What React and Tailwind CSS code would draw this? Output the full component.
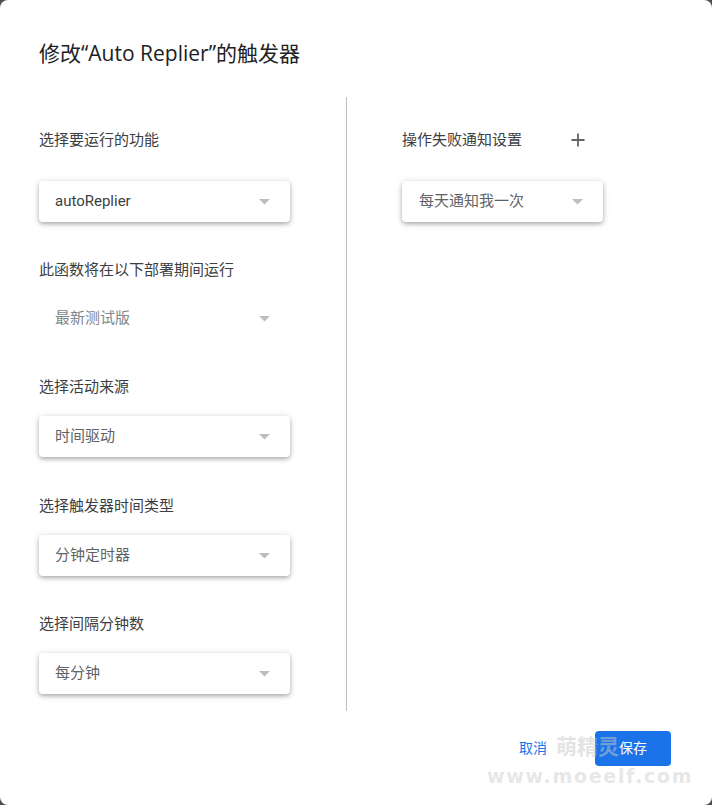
import React from "react";

const FONT = { fontFamily: 'Roboto, "Noto Sans CJK SC", sans-serif' };

function Arrow() {
  return (
    <svg width="11" height="6" viewBox="0 0 11 6" className="shrink-0">
      <path d="M0 0 L11 0 L5.5 5.5 Z" fill="#bdbdbd" />
    </svg>
  );
}

function Select({ text, color = "text-[#5f6368]", width = "w-[251px]", pl = "pl-[16px]" }) {
  return (
    <div
      className={`${width} h-[41px] flex items-center justify-between ${pl} pr-[20px] bg-white rounded-[4px] shadow-[0_2px_4px_rgba(0,0,0,0.28),0_1px_8px_rgba(0,0,0,0.1)]`}
    >
      <span className={`text-[15px] ${color}`}>{text}</span>
      <Arrow />
    </div>
  );
}

function Label({ children, className = "" }) {
  return <div className={`text-[15px] leading-[20px] text-[#3c4043] ${className}`}>{children}</div>;
}

export default function App() {
  return (
    <div className="w-[712px] h-[805px] bg-[#4d4d4d]" style={FONT}>
      <div className="relative w-full h-full bg-white rounded-[8px] flex flex-col">
        <div
          className="pl-[39px] pt-[39px] text-[21px] leading-[28px] text-[#202124]"
          style={{ fontFamily: '"Open Sans", "Noto Sans CJK SC", sans-serif' }}
        >
          修改“Auto Replier”的触发器
        </div>

        <div className="flex mt-[30px]">
          <div className="w-[347px] pl-[39px] border-r border-[#bdc1c6] flex flex-col pb-[17px]">
            <Label className="mt-[33px]">选择要运行的功能</Label>
            <div className="mt-[31px]">
              <Select text="autoReplier" color="text-[#3c4043]" />
            </div>

            <Label className="mt-[38px]">此函数将在以下部署期间运行</Label>
            <div className="mt-[18px] w-[251px] h-[41px] flex items-center justify-between pl-[16px] pr-[20px]">
              <span className="text-[15px] text-[#80868b]">最新测试版</span>
              <Arrow />
            </div>

            <Label className="mt-[38px]">选择活动来源</Label>
            <div className="mt-[19px]">
              <Select text="时间驱动" />
            </div>

            <Label className="mt-[39px]">选择触发器时间类型</Label>
            <div className="mt-[19px]">
              <Select text="分钟定时器" />
            </div>

            <Label className="mt-[38px]">选择间隔分钟数</Label>
            <div className="mt-[19px]">
              <Select text="每分钟" />
            </div>
          </div>

          <div className="pl-[55px] flex flex-col">
            <div className="mt-[33px] flex items-center">
              <Label>操作失败通知设置</Label>
              <svg width="14" height="14" viewBox="0 0 14 14" className="ml-[49px]">
                <path d="M7 0.5 V13.5 M0.5 7 H13.5" stroke="#5f6368" strokeWidth="1.8" />
              </svg>
            </div>
            <div className="mt-[31px]">
              <Select text="每天通知我一次" width="w-[201px]" pl="pl-[17px]" />
            </div>
          </div>
        </div>

        <div className="flex justify-end items-center pr-[41px] mt-[20px]">
          <span className="text-[14px] text-[#1a73e8] mr-[48px]">取消</span>
          <div className="w-[76px] h-[35px] rounded-[4px] bg-[#1a73e8] flex items-center justify-center text-[14px] text-white">
            保存
          </div>
        </div>

        <div className="absolute left-[556px] top-[735px] text-[21px] font-bold leading-[24px] text-[rgba(200,200,200,0.5)] pointer-events-none">
          萌精灵
        </div>
        <div
          className="absolute left-[487px] top-[765px] text-[19px] font-black leading-[22px] tracking-[1.7px] text-[rgba(210,210,210,0.55)] pointer-events-none"
          style={{ fontFamily: '"DejaVu Sans", sans-serif' }}
        >
          www.moeelf.com
        </div>
      </div>
    </div>
  );
}
